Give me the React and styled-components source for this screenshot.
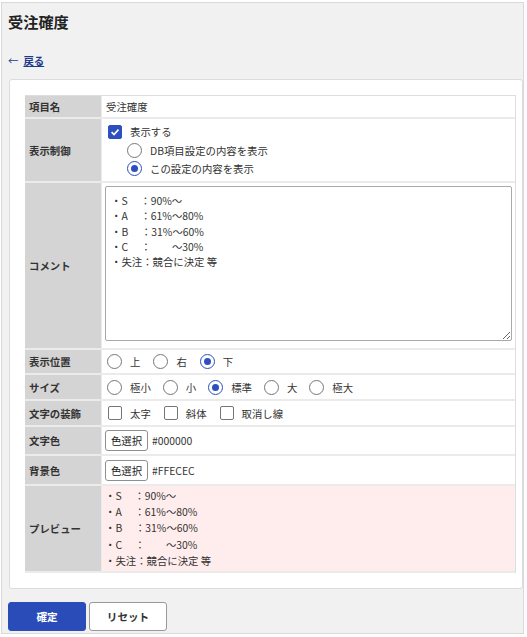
import React from 'react'
import styled, {createGlobalStyle} from 'styled-components'

const GlobalStyle = createGlobalStyle`
  html, body {
    margin: 0;
    padding: 0;
    background: #ffffff;
  }
  body {
    font-family: "Noto Sans CJK JP", "Noto Sans", sans-serif;
    font-size: 10.4px;
    color: #333333;
  }
`

const Page = styled.div`
  box-sizing: border-box;
  margin: 2px 3px 0 1px;
  width: 523px;
  height: 632px;
  border: 1px solid #d9d9d9;
  background: #f1f1f1;
  padding: 0 0 0 6px;
`
const Title = styled.h1`
  margin: 0;
  padding-top: 6px;
  font-size: 15.2px;
  line-height: 24px;
  font-weight: 700;
  color: #222222;
`
const BackLink = styled.div`
  margin-top: 20px;
  line-height: 16px;
  color: #1e3a8f;
  display: flex;
  gap: 5px;
  font-weight: 700;
`
const Arrow = styled.span`
  font-weight: 400;
`
const LinkText = styled.a`
  color: #1e3a8f;
  text-decoration: underline;
  cursor: pointer;
`
const Panel = styled.div`
  box-sizing: border-box;
  margin: 10px 0 0 1px;
  background: #ffffff;
  border: 1px solid #dcdcdc;
  border-radius: 3px;
  padding: 15px 6px 15px 15px;
`
const Table = styled.div`
  display: flex;
  flex-direction: column;
  border-top: 1px solid #dedede;
  border-right: 1px solid #dedede;
`
const Row = styled.div`
  box-sizing: border-box;
  display: grid;
  grid-template-columns: 77px 1fr;
  height: ${p => p.$h}px;
  border-bottom: 2px solid #ebebeb;
`
const Label = styled.div`
  display: flex;
  align-items: center;
  background: #d4d4d4;
  padding-left: 4px;
  font-weight: 700;
  color: #333333;
  border-right: 1px solid #ebebeb;
`
const Value = styled.div`
  display: flex;
  flex-direction: ${p => (p.$column ? 'column' : 'row')};
  align-items: ${p => (p.$column ? 'flex-start' : 'center')};
  padding: ${p => p.$pad || '0 0 0 4px'};
  background: ${p => p.$bg || '#ffffff'};
  min-width: 0;
`
const Option = styled.label`
  display: flex;
  align-items: center;
  height: ${p => p.$h || 18}px;
  margin-left: ${p => p.$indent || 0}px;
  margin-right: ${p => p.$gap || 0}px;
  gap: 8px;
  white-space: nowrap;
`
const Box = styled.span`
  box-sizing: border-box;
  width: 14px;
  height: 14px;
  border-radius: 2px;
  border: 1px solid ${p => (p.$on ? '#2d4fbf' : '#767676')};
  background: ${p => (p.$on ? '#2d4fbf' : '#ffffff')};
  display: flex;
  align-items: center;
  justify-content: center;
  flex-shrink: 0;
`
const Radio = styled.span`
  box-sizing: border-box;
  width: 15px;
  height: 15px;
  border-radius: 50%;
  border: 1.5px solid ${p => (p.$on ? '#2d4fbf' : '#767676')};
  background: #ffffff;
  display: flex;
  align-items: center;
  justify-content: center;
  flex-shrink: 0;
  &::after {
    content: '';
    display: ${p => (p.$on ? 'block' : 'none')};
    width: 7px;
    height: 7px;
    border-radius: 50%;
    background: #2d4fbf;
  }
`
const Comment = styled.textarea`
  box-sizing: border-box;
  width: 407px;
  height: 155px;
  margin: 0;
  border: 1px solid #a9a9a9;
  border-radius: 2px;
  padding: 6px 5px;
  font-family: "Noto Sans CJK JP", "Noto Sans", sans-serif;
  font-size: 10.4px;
  line-height: 15.3px;
  color: #333333;
  resize: vertical;
  outline: none;
`
const PickButton = styled.button`
  box-sizing: border-box;
  height: 21px;
  width: 43px;
  padding: 0;
  border: 1px solid #8f8f8f;
  border-radius: 3px;
  background: #ffffff;
  font-family: inherit;
  font-size: 10.4px;
  color: #222222;
  margin-right: 4px;
`
const PreviewText = styled.div`
  line-height: 16.2px;
  white-space: pre;
  color: #333333;
`
const Actions = styled.div`
  display: flex;
  gap: 3px;
  margin: 13px 0 0 0;
`
const Button = styled.button`
  box-sizing: border-box;
  width: 78px;
  height: 29px;
  border-radius: 3px;
  font-family: inherit;
  font-size: 10.6px;
  font-weight: 700;
  border: 1px solid ${p => (p.$primary ? '#2a4cb9' : '#9a9a9a')};
  background: ${p => (p.$primary ? '#2a4cb9' : '#ffffff')};
  color: ${p => (p.$primary ? '#ffffff' : '#333333')};
`

const Check = () => (
  <svg width="10" height="10" viewBox="0 0 10 10">
    <path d="M1.6 5.2 L4 7.5 L8.5 2.6" fill="none" stroke="#ffffff" strokeWidth="1.7" />
  </svg>
)

const comment = '・S　 ：90%～\n・A　 ：61%～80%\n・B　 ：31%～60%\n・C　 ：　　～30%\n・失注：競合に決定 等'

const positions = [{t: '上'}, {t: '右'}, {t: '下', on: true}]
const sizes = [{t: '極小'}, {t: '小'}, {t: '標準', on: true}, {t: '大'}, {t: '極大'}]
const decorations = ['太字', '斜体', '取消し線']

export default function App() {
  return (
    <>
      <GlobalStyle/>
      <Page>
        <Title>受注確度</Title>
        <BackLink><Arrow>←</Arrow><LinkText>戻る</LinkText></BackLink>
        <Panel>
          <Table>
            <Row $h={23}>
              <Label>項目名</Label>
              <Value>受注確度</Value>
            </Row>
            <Row $h={64}>
              <Label>表示制御</Label>
              <Value $column $pad="3px 0 0 6px">
                <Option $h={19}><Box $on><Check/></Box>表示する</Option>
                <Option $indent={19}><Radio/>DB項目設定の内容を表示</Option>
                <Option $indent={19}><Radio $on/>この設定の内容を表示</Option>
              </Value>
            </Row>
            <Row $h={167}>
              <Label>コメント</Label>
              <Value $column $pad="3px 0 0 3px">
                <Comment readOnly defaultValue={comment}/>
              </Value>
            </Row>
            <Row $h={25}>
              <Label>表示位置</Label>
              <Value $pad="0 0 0 5px">
                {positions.map(p => (
                  <Option key={p.t} $gap={13}><Radio $on={p.on}/>{p.t}</Option>
                ))}
              </Value>
            </Row>
            <Row $h={26}>
              <Label>サイズ</Label>
              <Value $pad="0 0 0 5px">
                {sizes.map(p => (
                  <Option key={p.t} $gap={12}><Radio $on={p.on}/>{p.t}</Option>
                ))}
              </Value>
            </Row>
            <Row $h={26}>
              <Label>文字の装飾</Label>
              <Value $pad="0 0 0 6px">
                {decorations.map(t => (
                  <Option key={t} $gap={13}><Box/>{t}</Option>
                ))}
              </Value>
            </Row>
            <Row $h={29}>
              <Label>文字色</Label>
              <Value $pad="0 0 0 3px">
                <PickButton>色選択</PickButton>#000000
              </Value>
            </Row>
            <Row $h={30}>
              <Label>背景色</Label>
              <Value $pad="0 0 0 3px">
                <PickButton>色選択</PickButton>#FFECEC
              </Value>
            </Row>
            <Row $h={87}>
              <Label>プレビュー</Label>
              <Value $bg="#ffecec" $pad="0 0 0 3px">
                <PreviewText>{comment}</PreviewText>
              </Value>
            </Row>
          </Table>
        </Panel>
        <Actions>
          <Button $primary>確定</Button>
          <Button>リセット</Button>
        </Actions>
      </Page>
    </>
  )
}
